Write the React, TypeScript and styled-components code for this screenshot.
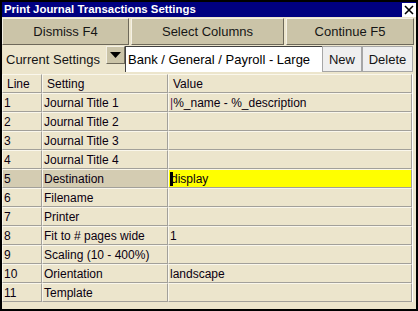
import React from 'react';
import styled, {createGlobalStyle} from 'styled-components';

const GlobalStyle = createGlobalStyle`
	html, body {
		margin: 0;
		padding: 0;
		background: #000;
		font-family: "Liberation Sans", Arial, sans-serif;
	}
`;

const Window = styled.div`
	width: 414px;
	height: 307px;
	margin: 2px 0 0 2px;
	background: #ece5cc;
	display: flex;
	flex-direction: column;
	overflow: hidden;
`;

const TitleBar = styled.div`
	height: 15px;
	background: #000080;
	color: #fff;
	font-weight: bold;
	font-size: 11.4px;
	display: flex;
	align-items: center;
	justify-content: space-between;
	padding-left: 2px;
	> span {
		margin-top: -1px;
	}
`;

const CloseBox = styled.div`
	width: 14px;
	height: 14px;
	background: #fff;
	display: flex;
	align-items: center;
	justify-content: center;
	margin-top: 1px;
`;

const ButtonBar = styled.div`
	margin-top: 1px;
	height: 27px;
	display: grid;
	grid-template-columns: 127px 153px 1fr;
	gap: 2px;
	padding-right: 2px;
`;

const ToolButton = styled.div`
	background: #cbc4a8;
	border: 1px solid;
	border-color: #f4f0e4 #6e695a #6e695a #f4f0e4;
	font-size: 13px;
	color: #151515;
	display: flex;
	align-items: center;
	justify-content: center;
`;

const SettingsRow = styled.div`
	height: 28px;
	display: flex;
	align-items: center;
`;

const Label = styled.div`
	width: 104px;
	padding-left: 4px;
	font-size: 13px;
	color: #151515;
	box-sizing: border-box;
`;

const DropButton = styled.div`
	width: 19px;
	height: 18px;
	margin-top: -8px;
	box-sizing: border-box;
	background: #cbc4a8;
	border: 1px solid;
	border-color: #f4f0e4 #6e695a #6e695a #f4f0e4;
	display: flex;
	align-items: center;
	justify-content: center;
`;

const Field = styled.div`
	width: 197px;
	height: 26px;
	box-sizing: border-box;
	background: #fff;
	border-top: 1px solid #404040;
	border-left: 1px solid #404040;
	font-size: 13px;
	color: #000;
	display: flex;
	align-items: center;
	padding-left: 2px;
	white-space: nowrap;
`;

const SmallButton = styled.div<{ $w: number }>`
	width: ${p => p.$w}px;
	height: 26px;
	box-sizing: border-box;
	background: #efefef;
	border: 1px solid #a6a6a6;
	font-size: 13px;
	color: #151515;
	display: flex;
	align-items: center;
	justify-content: center;
`;

const Table = styled.div`
	margin-top: 1px;
	width: 410px;
	display: grid;
	grid-template-columns: 40px 126px 1fr;
	border-right: 1px solid #fff;
`;

const Cell = styled.div<{ $head?: boolean; $sel?: 'row' | 'value' }>`
	height: 19px;
	box-sizing: border-box;
	border-top: 1px solid #faf7ec;
	border-bottom: 1px solid #a2a09a;
	border-right: 1px solid #a2a09a;
	border-left: 1px solid #faf7ec;
	padding-left: ${p => p.$head ? 4 : 1}px;
	font-size: 12px;
	color: #0a0010;
	display: flex;
	align-items: center;
	white-space: nowrap;
	overflow: hidden;
	background: ${p => p.$sel === 'row' ? '#d4ccb2' : p.$sel === 'value' ? '#ffff00' : 'transparent'};
`;

const Caret = styled.span`
	display: inline-block;
	width: 3px;
	height: 14px;
	background: #000;
	margin-right: -2px;
`;

const TextCaret = styled.span`
	color: #5a1050;
`;

const rows: [string, string][] = [
	['Journal Title 1', '%_name - %_description'],
	['Journal Title 2', ''],
	['Journal Title 3', ''],
	['Journal Title 4', ''],
	['Destination', 'display'],
	['Filename', ''],
	['Printer', ''],
	['Fit to # pages wide', '1'],
	['Scaling (10 - 400%)', ''],
	['Orientation', 'landscape'],
	['Template', ''],
];

export default function App() {
	return (
		<>
			<GlobalStyle/>
			<Window>
				<TitleBar>
					<span>Print Journal Transactions Settings</span>
					<CloseBox>
						<svg width="10" height="10" viewBox="0 0 10 10">
							<path d="M1 1 L9 9 M9 1 L1 9" stroke="#000" strokeWidth="1.6"/>
						</svg>
					</CloseBox>
				</TitleBar>
				<ButtonBar>
					<ToolButton>Dismiss F4</ToolButton>
					<ToolButton>Select Columns</ToolButton>
					<ToolButton>Continue F5</ToolButton>
				</ButtonBar>
				<SettingsRow>
					<Label>Current Settings</Label>
					<DropButton>
						<svg width="11" height="6" viewBox="0 0 11 6">
							<path d="M0 0 H11 L5.5 6 Z" fill="#000"/>
						</svg>
					</DropButton>
					<Field>Bank / General / Payroll - Large</Field>
					<SmallButton $w={40}>New</SmallButton>
					<SmallButton $w={51}>Delete</SmallButton>
				</SettingsRow>
				<Table>
					<Cell $head>Line</Cell>
					<Cell $head>Setting</Cell>
					<Cell $head>Value</Cell>
					{rows.map(([name, value], i) => {
						const sel = i === 4;
						return (
							<React.Fragment key={name}>
								<Cell $sel={sel ? 'row' : undefined}>{i + 1}</Cell>
								<Cell $sel={sel ? 'row' : undefined}>{name}</Cell>
								<Cell $sel={sel ? 'value' : undefined}>
									{i === 0 && <TextCaret>|</TextCaret>}
									{sel && <Caret/>}
									{value}
								</Cell>
							</React.Fragment>
						);
					})}
				</Table>
			</Window>
		</>
	);
}
